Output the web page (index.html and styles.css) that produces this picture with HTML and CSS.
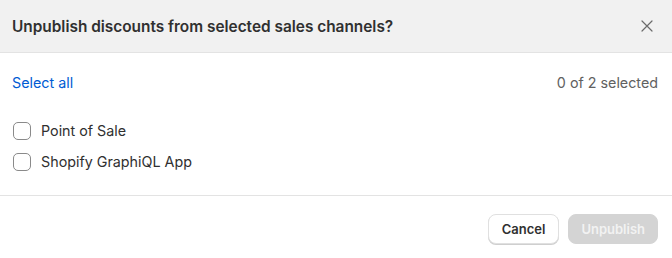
FILE: index.html
```html
<!DOCTYPE html>
<html lang="en">
<head>
    <meta charset="UTF-8">
    <title>Unpublish discounts</title>
    <link rel="stylesheet" href="styles.css">
</head>
<body>
    <div class="modal">
        <div class="modal-header">
            <h2 class="modal-title">Unpublish discounts from selected sales channels?</h2>
            <button class="close-btn" aria-label="Close">
                <svg width="12" height="12" viewBox="0 0 12 12"><path d="M1 1L11 11M11 1L1 11" stroke="#6b6b6b" stroke-width="1.2" stroke-linecap="round"/></svg>
            </button>
        </div>

        <div class="modal-body">
            <div class="select-row">
                <a href="#" class="link">Select all</a>
                <span class="count">0 of 2 selected</span>
            </div>
            <ul class="channel-list">
                <li><label class="check"><span class="box"></span>Point of Sale</label></li>
                <li><label class="check"><span class="box"></span>Shopify GraphiQL App</label></li>
            </ul>
        </div>

        <div class="modal-footer">
            <button class="btn">Cancel</button>
            <button class="btn btn-primary" disabled>Unpublish</button>
        </div>
    </div>
</body>
</html>
```

FILE: styles.css
```css
body {
    margin: 0;
    font-family: Inter, "Noto Sans", sans-serif;
    font-size: 14.3px;
    color: #303030;
    background: #fff;
}

.modal {
    width: 672px;
    height: 258px;
    display: flex;
    flex-direction: column;
}

.modal-header {
    height: 52px;
    background-color: #f1f1f1;
    border-bottom: 1px solid #e3e3e3;
    display: flex;
    align-items: center;
    justify-content: space-between;
    padding: 0 14px 0 12px;
}

.modal-title {
    margin: 0;
    font-size: 15.4px;
    font-weight: 600;
    color: #303030;
}

.close-btn {
    border: none;
    background: none;
    padding: 6px;
    margin-right: -1px;
    display: flex;
    cursor: pointer;
}

.modal-body {
    padding: 20px 14px 23px 12px;
    border-bottom: 1px solid #e3e3e3;
}

.select-row {
    display: flex;
    justify-content: space-between;
    line-height: 20px;
}

.link {
    color: #005bd3;
    text-decoration: none;
}

.count {
    color: #616161;
}

.channel-list {
    list-style: none;
    margin: 28px 0 0;
    padding: 0;
    display: flex;
    flex-direction: column;
    gap: 11px;
}

.check {
    display: flex;
    align-items: center;
    gap: 10px;
    line-height: 20px;
    padding-left: 1px;
}

.box {
    width: 16px;
    height: 16px;
    border: 1px solid #8a8a8a;
    border-radius: 5px;
    background: #fff;
}

.modal-footer {
    flex: 1;
    display: flex;
    justify-content: flex-end;
    align-items: flex-start;
    gap: 9px;
    padding: 18px 14px 0 12px;
}

.btn {
    font-family: inherit;
    font-size: 13px;
    font-weight: 600;
    height: 30px;
    padding: 0 13px;
    border-radius: 8px;
    border: 1px solid #e0e0e0;
    background: #fff;
    color: #303030;
    box-shadow: 0 1px 0 #cfcfcf;
}

.btn-primary {
    background: #d4d4d4;
    border-color: #d4d4d4;
    color: #f2f2f2;
    box-shadow: none;
    padding: 0 12px;
}
```
